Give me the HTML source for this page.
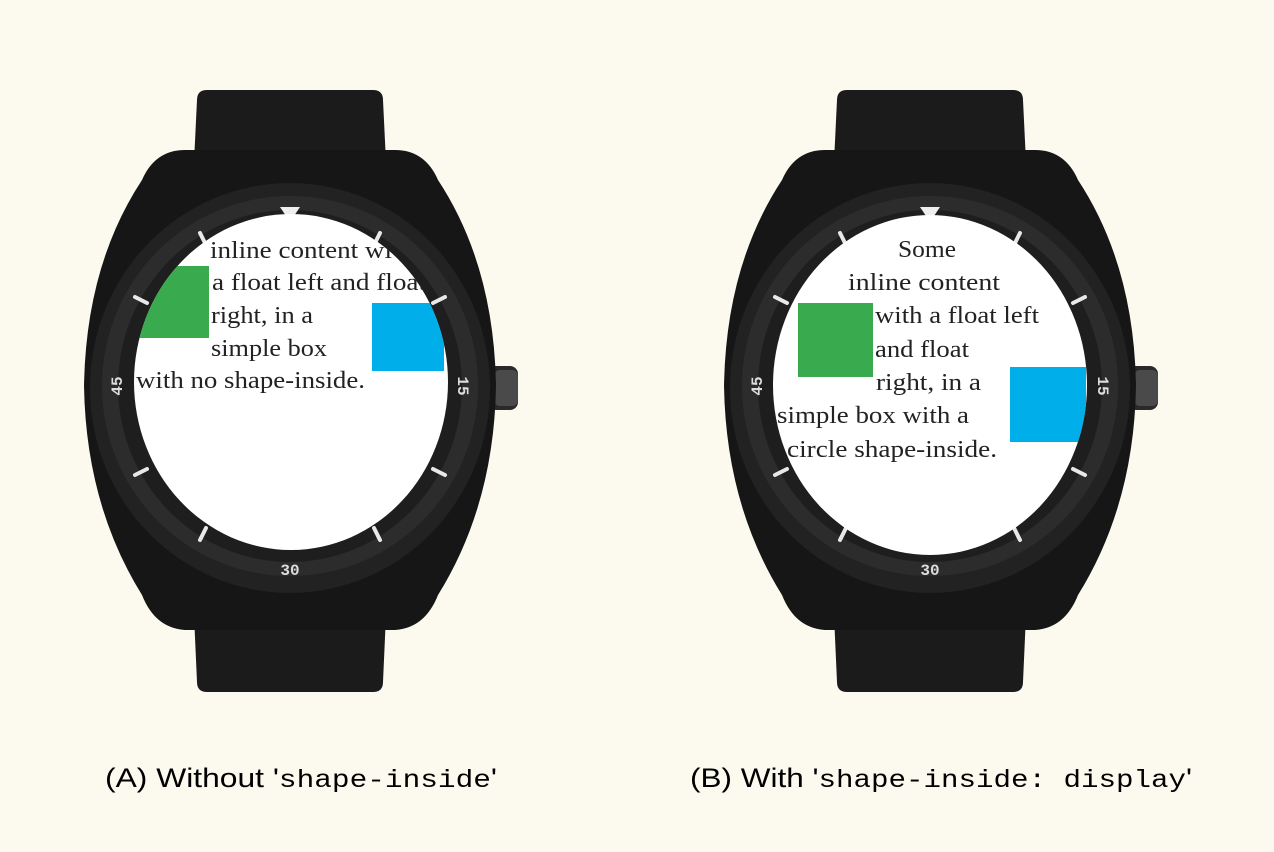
<!DOCTYPE html>
<html><head><meta charset="utf-8"><style>
html,body{margin:0;padding:0;background:#fcf9ee;}
svg{display:block}
.t{font-family:"Liberation Serif",serif;font-size:24px;fill:#222}
.c{font-family:"Liberation Sans",sans-serif;font-size:27px;fill:#000}
.m{font-family:"Liberation Mono",monospace;font-size:25px}
</style></head><body>
<svg width="1274" height="852" viewBox="0 0 1274 852" xmlns="http://www.w3.org/2000/svg">
<defs>
<g id="w">
  <path d="M197 100 Q197 90 207 90 L373 90 Q383 90 383 100 L386 162 L194 162 Z" fill="#1b1b1b"/>
  <path d="M194 615 L386 615 L383 682 Q383 692 373 692 L207 692 Q197 692 197 682 Z" fill="#1b1b1b"/>
  <rect x="488" y="366" width="30" height="44" rx="8" fill="#2a2a2a"/>
  <rect x="494" y="370" width="24" height="36" rx="6" fill="#4a4a4a"/>
  <path d="M185 150 L395 150 Q425 150 438 180 Q494 265 496 386 Q494 505 438 595 Q425 628 395 630 L185 630 Q155 628 142 595 Q86 505 84 386 Q86 265 142 180 Q155 150 185 150 Z" fill="#161616"/>
  <ellipse cx="290" cy="388" rx="200" ry="205" fill="#222"/>
  <ellipse cx="290" cy="386" rx="188" ry="190" fill="#2c2c2c"/>
  <ellipse cx="290" cy="386" rx="172" ry="176" fill="#1e1e1e"/>
  <g stroke="#e8e8e8" stroke-width="4" stroke-linecap="round">
    <line x1="200" y1="233" x2="206" y2="245"/>
    <line x1="380" y1="233" x2="374" y2="245"/>
    <line x1="135" y1="297" x2="147" y2="303"/>
    <line x1="445" y1="297" x2="433" y2="303"/>
    <line x1="135" y1="475" x2="147" y2="469"/>
    <line x1="445" y1="475" x2="433" y2="469"/>
    <line x1="200" y1="540" x2="206" y2="528"/>
    <line x1="380" y1="540" x2="374" y2="528"/>
  </g>
  <path d="M280 207 L300 207 L290 222 Z" fill="#eee"/>
  <text x="290" y="575" font-family="Liberation Mono,monospace" font-size="16" font-weight="bold" fill="#ddd" text-anchor="middle">30</text>
  <text x="116" y="392" font-family="Liberation Mono,monospace" font-size="16" font-weight="bold" fill="#ddd" text-anchor="middle" transform="rotate(-90 116 386)">45</text>
  <text x="464" y="392" font-family="Liberation Mono,monospace" font-size="16" font-weight="bold" fill="#ddd" text-anchor="middle" transform="rotate(90 464 386)">15</text>
</g>
<clipPath id="ca"><ellipse cx="291" cy="382" rx="157" ry="168"/></clipPath>
<clipPath id="cb"><ellipse cx="930" cy="385" rx="157" ry="170"/></clipPath>
</defs>
<use href="#w"/>
<use href="#w" x="640"/>
<ellipse cx="291" cy="382" rx="157" ry="168" fill="#fff"/>
<g clip-path="url(#ca)">
<rect x="138" y="266" width="71" height="72" fill="#3aaa4f"/>
<rect x="372" y="303" width="72" height="68" fill="#00aeea"/>
<text class="t" x="210" y="258" textLength="182" lengthAdjust="spacingAndGlyphs">inline content wi</text>
<text class="t" x="212" y="290" textLength="214" lengthAdjust="spacingAndGlyphs">a float left and float</text>
<text class="t" x="211" y="323" textLength="102" lengthAdjust="spacingAndGlyphs">right, in a</text>
<text class="t" x="211" y="356" textLength="116" lengthAdjust="spacingAndGlyphs">simple box</text>
<text class="t" x="136" y="388" textLength="229" lengthAdjust="spacingAndGlyphs">with no shape-inside.</text>
</g>
<ellipse cx="930" cy="385" rx="157" ry="170" fill="#fff"/>
<g clip-path="url(#cb)">
<rect x="798" y="303" width="75" height="74" fill="#3aaa4f"/>
<rect x="1010" y="367" width="76" height="75" fill="#00aeea"/>
<text class="t" x="898" y="257" textLength="58" lengthAdjust="spacingAndGlyphs">Some</text>
<text class="t" x="848" y="290" textLength="152" lengthAdjust="spacingAndGlyphs">inline content</text>
<text class="t" x="875" y="323" textLength="164" lengthAdjust="spacingAndGlyphs">with a float left</text>
<text class="t" x="875" y="357" textLength="94" lengthAdjust="spacingAndGlyphs">and float</text>
<text class="t" x="876" y="390" textLength="105" lengthAdjust="spacingAndGlyphs">right, in a</text>
<text class="t" x="777" y="423" textLength="192" lengthAdjust="spacingAndGlyphs">simple box with a</text>
<text class="t" x="787" y="457" textLength="210" lengthAdjust="spacingAndGlyphs">circle shape-inside.</text>
</g>
<text class="c" x="105" y="787" textLength="392" lengthAdjust="spacingAndGlyphs">(A) Without '<tspan class="m">shape-inside</tspan>'</text>
<text class="c" x="690" y="787" textLength="502" lengthAdjust="spacingAndGlyphs">(B) With '<tspan class="m">shape-inside: display</tspan>'</text>
</svg>
</body></html>
